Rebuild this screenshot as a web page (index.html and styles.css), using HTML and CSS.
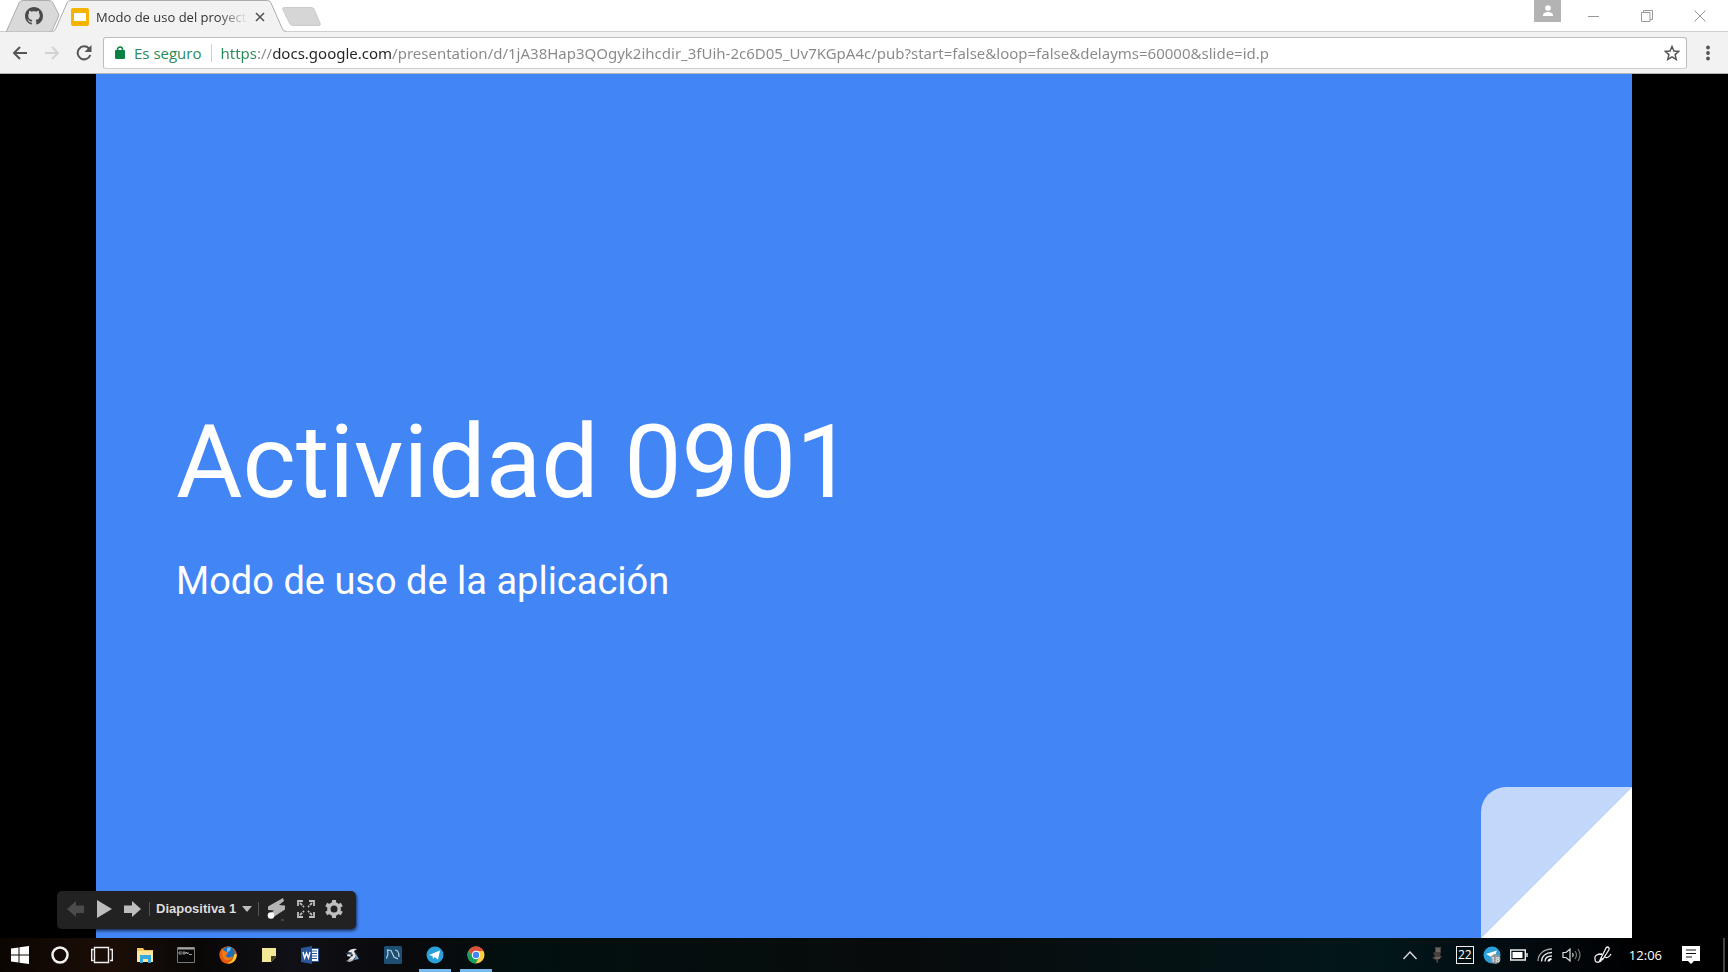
FILE: index.html
```html
<!DOCTYPE html>
<html lang="es">
<head>
<meta charset="utf-8">
<title>Modo de uso del proyecto</title>
<link rel="stylesheet" href="styles.css">
</head>
<body>
<header class="tabstrip">
  <button class="tab tab-pinned" aria-label="GitHub">
    <svg class="tab-shape" width="56" height="32" viewBox="0 0 56 32"><path d="M0 32L1 30 13 3Q14 .5 17 .5H43Q46 .5 47 3L53 15 47 29Q46 32 44 32Z" fill="#d9d9d9" stroke="#adadad"/></svg>
    <svg class="tab-icon" width="18" height="18" viewBox="0 0 16 16"><path fill="#4d4a4a" d="M8 0C3.58 0 0 3.58 0 8c0 3.54 2.29 6.53 5.47 7.59.4.07.55-.17.55-.38 0-.19-.01-.82-.01-1.49-2.01.37-2.53-.49-2.69-.94-.09-.23-.48-.94-.82-1.13-.28-.15-.68-.52-.01-.53.63-.01 1.08.58 1.23.82.72 1.21 1.87.87 2.33.66.07-.52.28-.87.51-1.07-1.78-.2-3.64-.89-3.64-3.95 0-.87.31-1.59.82-2.15-.08-.2-.36-1.02.08-2.12 0 0 .67-.21 2.2.82.64-.18 1.32-.27 2-.27s1.36.09 2 .27c1.53-1.04 2.2-.82 2.2-.82.44 1.1.16 1.92.08 2.12.51.56.82 1.27.82 2.15 0 3.07-1.87 3.75-3.65 3.95.29.25.54.73.54 1.48 0 1.07-.01 1.93-.01 2.2 0 .21.15.46.55.38A8.01 8.01 0 0 0 16 8c0-4.42-3.58-8-8-8z"/></svg>
  </button>
  <div class="tab tab-active">
    <svg class="tab-shape" width="234" height="33" viewBox="0 0 234 33"><path d="M0 33V31.500Q2 31 3 28L14 3Q15 .5 18 .5H214Q217 .5 218 3L229 28Q230 31.500 233 31.500V33Z" fill="#f2f2f2"/><path d="M0 31.500Q2 31 3 28L14 3Q15 .5 18 .5H214Q217 .5 218 3L229 28Q230 31.500 233 31.500" fill="none" stroke="#adadad"/></svg>
    <svg class="tab-icon" width="18" height="18" viewBox="0 0 18 18"><rect width="18" height="18" rx="2" fill="#f5b400"/><rect x="3" y="5" width="12" height="8" fill="#fff"/></svg>
    <span class="tab-title">Modo de uso del proyect</span>
    <button class="tab-close" aria-label="Cerrar"><svg width="10" height="10" viewBox="0 0 10 10"><path d="M1 1l8 8M9 1l-8 8" stroke="#555" stroke-width="1.600"/></svg></button>
  </div>
  <button class="new-tab" aria-label="Nueva pestaña"><svg width="40" height="20" viewBox="0 0 40 20"><path d="M2 .5H29Q31 .5 32 2L38 16Q39 18.500 37 18.500H11Q9 18.500 8 17L1 3Q0 .5 2 .5Z" fill="#d6d6d6" stroke="#cbcbcb"/></svg></button>
  <div class="window-buttons">
    <button class="profile" aria-label="Perfil"><svg width="12" height="12" viewBox="0 0 12 12" fill="#fff"><circle cx="6" cy="3" r="2.800"/><path d="M1 11V9.500Q2 7 6 7t5 2.500V11Z"/></svg></button>
    <button class="win" aria-label="Minimizar"><svg width="12" height="12" viewBox="0 0 12 12"><path d="M0 6.500H11" stroke="#999"/></svg></button>
    <button class="win" aria-label="Restaurar"><svg width="12" height="12" viewBox="0 0 12 12" fill="none" stroke="#999"><path d="M.5 2.500h8.500v9H.5zM2.500 2.500v-2h9v9H9"/></svg></button>
    <button class="win" aria-label="Cerrar ventana"><svg width="12" height="12" viewBox="0 0 12 12"><path d="M.5.5l11 11M11.500.5l-11 11" stroke="#999"/></svg></button>
  </div>
</header>

<nav class="toolbar">
  <button class="nav" aria-label="Atrás"><svg width="16" height="14" viewBox="0 0 16 14" fill="none" stroke="#555" stroke-width="2"><path d="M15 7H2M8 1L2 7l6 6"/></svg></button>
  <button class="nav" aria-label="Adelante"><svg width="16" height="14" viewBox="0 0 16 14" fill="none" stroke="#d2d2d2" stroke-width="2"><path d="M1 7H14M8 1l6 6-6 6"/></svg></button>
  <button class="nav" aria-label="Volver a cargar"><svg width="16" height="16" viewBox="0 0 16 16"><path d="M13 3.500A6.500 6.500 0 1 0 14.300 10" fill="none" stroke="#555" stroke-width="2"/><path d="M15.500 0v7h-7z" fill="#555"/></svg></button>
  <div class="omnibox">
    <svg width="10" height="13" viewBox="0 0 10 13"><rect y="4" width="10" height="9" rx="1" fill="#0b8043"/><path d="M2.500 5V3.500a2.500 2.500 0 0 1 5 0V5" fill="none" stroke="#0b8043" stroke-width="1.500"/></svg>
    <label class="secure" for="url">Es seguro</label>
    <input class="url" id="url" type="text" spellcheck="false" value="https://docs.google.com/presentation/d/1jA38Hap3QOgyk2ihcdir_3fUih-2c6D05_Uv7KGpA4c/pub?start=false&amp;loop=false&amp;delayms=60000&amp;slide=id.p">
    <button class="star" aria-label="Añadir a marcadores"><svg width="16" height="16" viewBox="0 0 16 16"><path d="M8 1.500l1.900 4.500 4.900.4-3.700 3.200 1.100 4.800L8 11.900l-4.200 2.500 1.100-4.800L1.200 6.400 6.100 6z" fill="none" stroke="#555" stroke-width="1.500"/></svg></button>
  </div>
  <button class="menu" aria-label="Menú"><svg width="4" height="16" viewBox="0 0 4 16" fill="#555"><circle cx="2" cy="2.500" r="1.900"/><circle cx="2" cy="8" r="1.900"/><circle cx="2" cy="13.500" r="1.900"/></svg></button>
</nav>

<main class="stage">
  <section class="slide">
    <h1 class="slide-title">Actividad 0901</h1>
    <p class="slide-subtitle">Modo de uso de la aplicación</p>
    <svg class="fold" viewBox="0 0 151 151"><path d="M0 151V25A25 25 0 0 1 25 0H151Z" fill="#c2d7fa"/><path d="M0 151L151 0V151Z" fill="#fff"/></svg>
  </section>
  <div class="player">
    <button aria-label="Anterior"><svg width="18" height="18" viewBox="0 0 18 18"><path d="M0 9L9 1V5.500H17V13H9V17Z" fill="#4b4b4b"/></svg></button>
    <button aria-label="Reproducir"><svg width="18" height="18" viewBox="0 0 18 18"><path d="M2 0L17 9 2 18Z" fill="#bdbdbd"/></svg></button>
    <button aria-label="Siguiente"><svg width="18" height="18" viewBox="0 0 18 18"><path d="M18 9L9 1V5.500H1V13H9V17Z" fill="#bdbdbd"/></svg></button>
    <span class="slide-picker">
      <select aria-label="Diapositiva"><option>Diapositiva 1</option></select>
      <svg width="10" height="6" viewBox="0 0 10 6"><path d="M0 0H10L5 6Z" fill="#bdbdbd"/></svg>
    </span>
    <button aria-label="Puntero"><svg width="20" height="24" viewBox="0 0 20 24"><path d="M16 1L1 9.500V13L7 13.500 2 18 5 21 18 12.500V8.500L12 8 17 4Z" fill="#b4b4b4"/><circle cx="4" cy="18.500" r="3.300" fill="#fff"/><path d="M14 23h3" stroke="#666"/></svg></button>
    <button aria-label="Pantalla completa"><svg width="18" height="18" viewBox="0 0 18 18" fill="none" stroke="#bdbdbd" stroke-width="1.800"><path d="M1 6V1H6M12 1h5V6M17 12v5H12M6 17H1V12"/><path d="M3 3l4 4M15 3l-4 4M3 15l4-4M15 15l-4-4" stroke-dasharray="3 1"/></svg></button>
    <button aria-label="Opciones"><svg width="18" height="18" viewBox="0 0 18 18"><circle cx="9" cy="9" r="5.200" fill="none" stroke="#bdbdbd" stroke-width="3.400"/><path d="M9 0V3M9 15v3M1.200 4.500L4 6M14 12l2.800 1.500M1.200 13.500L4 12M14 6l2.800-1.500" stroke="#bdbdbd" stroke-width="4"/></svg></button>
  </div>
</main>

<footer class="taskbar">
  <nav class="apps">
    <button aria-label="Inicio"><svg width="18" height="18" viewBox="0 0 18 18" fill="#fff"><path d="M0 2.500L7.500 1.400V8.500H0zM8.500 1.200L18 0V8.500H8.500zM0 9.500H7.500V16.600L0 15.500zM8.500 9.500H18V18L8.500 16.800z"/></svg></button>
    <button aria-label="Cortana"><svg width="18" height="18" viewBox="0 0 18 18"><circle cx="9" cy="9" r="7.500" fill="none" stroke="#f2f2f2" stroke-width="2.500"/></svg></button>
    <button aria-label="Vista de tareas"><svg width="22" height="18" viewBox="0 0 22 18" fill="none" stroke="#eee" stroke-width="1.400"><path d="M3.500 1.500h14v15h-14zM2.500 3.500H.7v11h1.800M19 3.500h2.300v11H19"/></svg></button>
    <button aria-label="Explorador"><svg width="18" height="18" viewBox="0 0 18 18"><path d="M1 2h6l1.500 2H17v12H1z" fill="#f2c75c"/><path d="M1 5h16v11H1z" fill="#fee69c"/><path d="M4 9h11v8h-3v-4H7v4H4z" fill="#36a9df"/></svg></button>
    <button aria-label="Símbolo del sistema"><svg width="18" height="16" viewBox="0 0 18 16"><path d="M.5.5h17v15H.5z" fill="#080808" stroke="#777"/><path d="M1 1.500h16" stroke="#a5a5a5" stroke-width="2"/><path d="M2 5h3M2 7h3M2 5v2M6 5v2h2V5H6M9 7V5l2 2V5M12 7.500h3" fill="none" stroke="#bbb" stroke-width=".8"/></svg></button>
    <button aria-label="Firefox"><svg width="18" height="18" viewBox="0 0 18 18"><circle cx="9" cy="9" r="8.700" fill="#e8590c"/><path d="M17.700 8c.5 6-4 10-10 9.500C13 16 14.500 13 15 8z" fill="#ffcb2e"/><circle cx="9.500" cy="6.800" r="6.200" fill="#1f6fb5"/><path d="M8 2l4-1-1 4-3 1z" fill="#69bfe8"/><path d="M2.500 2.500L5.500 5 9 6.500C9 8 7 8.500 7 10c2 2.500 5 1.500 7 0-1 4-6 5.500-9 3C3 11 3 8 2.500 2.500Z" fill="#f0781a"/></svg></button>
    <button aria-label="Notas"><svg width="16" height="16" viewBox="0 0 16 16"><path d="M1 1h14v9l-5 5H1z" fill="#f4e795"/><path d="M15 9v1l-5 5V9z" fill="#403b20"/></svg></button>
    <button aria-label="Word"><svg width="18" height="18" viewBox="0 0 18 18"><path d="M9 2.500h8.500v13H9z" fill="#fff" stroke="#2b579a"/><path d="M11 5h5M11 7.500h5M11 10h5M11 12.500h5" stroke="#2b579a"/><path d="M0 2L11 0V18L0 16z" fill="#2b579a"/><path d="M2 6l1.600 6L5.500 7l2 5L9 6" fill="none" stroke="#fff" stroke-width="1.400"/></svg></button>
    <button aria-label="BlueJ"><svg width="16" height="16" viewBox="0 0 16 16"><path d="M4 5Q7 1 13 2L10 4 12 9 9 13H4L7 10 3 9Z" fill="#e6e9ec"/><path d="M11 5l4 7-5 1 2-4z" fill="#6d9cc5"/><path d="M1 7l3-2 4 .5-1 2z" fill="#2a3a48"/><path d="M8 6l1 3-3 1z" fill="#182430"/><path d="M2 14l5-2 3 1-4 2z" fill="#aeb9c2"/></svg></button>
    <button aria-label="MySQL Workbench"><svg width="18" height="18" viewBox="0 0 18 18"><rect width="18" height="18" rx="1.500" fill="#1d4e73"/><path d="M2.500 12.500L4 8 3.500 4l3.500.5L10 11l4 2M11 4c3 0 4 3 4 7" fill="none" stroke="#b9d0de" stroke-width="1.200"/></svg></button>
    <button class="running" aria-label="Telegram"><svg width="18" height="18" viewBox="0 0 18 18"><circle cx="9" cy="9" r="8.500" fill="#2aa1da"/><path d="M3 9L14 4.500 12 13.500 8.500 11 7 13 6.500 10z" fill="#fff"/></svg></button>
    <button class="running" aria-label="Chrome"><svg width="18" height="18" viewBox="0 0 18 18"><circle cx="9" cy="9" r="8.500" fill="#ffcd40"/><path d="M1.500 4.800A8.500 8.500 0 0 1 16.500 5H9L5.500 11z" fill="#dd4f3f"/><path d="M1.500 4.800A8.500 8.500 0 0 0 8.500 17.500L12.500 11 9 13 5.500 11z" fill="#13a15f"/><circle cx="9" cy="9" r="4.200" fill="#fff"/><circle cx="9" cy="9" r="3.200" fill="#4285f4"/></svg></button>
  </nav>
  <div class="tray">
    <button class="more" aria-label="Mostrar iconos ocultos"><svg width="16" height="16" viewBox="0 0 16 16"><path d="M1.500 12L8 5l6.500 7" fill="none" stroke="#ddd" stroke-width="1.400"/></svg></button>
    <button class="mic" aria-label="Micrófono"><svg width="12" height="18" viewBox="0 0 12 18"><path d="M4 1h6v5l-1 3 2 2-4 3v3H6l-1-3-4-2 3-2-2-3 2-1z" fill="#4a4240"/><path d="M5 3h4M5 5h4M4 12h5" stroke="#8e8582"/></svg></button>
    <button class="temp" aria-label="Temperatura 22">22</button>
    <button class="tray-telegram" aria-label="Telegram, mensajes sin leer"><svg width="18" height="18" viewBox="0 0 18 18"><circle cx="9" cy="9" r="8.500" fill="#2aa1da"/><path d="M3 8L14 4.500 11 12 6.500 10z" fill="#fff"/><circle cx="12.500" cy="13" r="5" fill="#91959b"/></svg><span class="unread">18</span></button>
    <button aria-label="Batería"><svg width="18" height="12" viewBox="0 0 18 12"><path d="M.7 1h14.600v10H.7zM17 4v4" fill="none" stroke="#eee" stroke-width="1.400"/><path d="M2.500 3h10v6h-10z" fill="#fff"/></svg></button>
    <button aria-label="Wi-Fi"><svg width="16" height="16" viewBox="0 0 16 16" fill="none" stroke-width="1.300"><path d="M1 14C1 7 7 2 15 2" stroke="#aaa"/><path d="M4.500 14.500C4.500 9 9 5.500 15 5.500M8 14.500C8 11 11 9 15 9" stroke="#e5e5e5"/><path d="M11.500 14.500q0-2 3-2.500" stroke="#fff" stroke-width="2"/></svg></button>
    <button class="volume" aria-label="Volumen"><svg width="20" height="16" viewBox="0 0 20 16" fill="none" stroke="#ddd" stroke-width="1.200"><path d="M1 5.500h3L8 2v12L4 10.500H1z"/><path d="M10.500 6q1.500 2 0 4"/><path d="M13 4q3 4 0 8M16 2q4 6 0 12" stroke="#777"/></svg></button>
    <button aria-label="Lápiz"><svg width="18" height="18" viewBox="0 0 18 18" fill="none" stroke="#eee" stroke-width="1.300"><path d="M6 14L12 2q1.500-2 3 0 .5 1-.5 2.500L9 13l-3.500 2.500zM8 8Q0 8 1 13q0 4 4 3 3-1 3-4M11 11q3 2 6-3"/></svg></button>
    <time class="clock">12:06</time>
    <button aria-label="Notificaciones"><svg width="18" height="18" viewBox="0 0 18 18"><path d="M0 0h18v15h-6l-3 3-3-3H0z" fill="#fff"/><path d="M4 4h10M4 7.500h10M4 11h6" stroke="#111" stroke-width="1.200"/></svg></button>
    <button class="show-desktop" aria-label="Mostrar escritorio"></button>
  </div>
</footer>
</body>
</html>
```

FILE: styles.css
```css
* { box-sizing: border-box; }

body {
  margin: 0;
  min-height: 100vh;
  display: flex;
  flex-direction: column;
  background: #000;
  font-family: "Open Sans", "Noto Sans", sans-serif;
}

button {
  display: flex;
  align-items: center;
  justify-content: center;
  padding: 0;
  border: 0;
  background: none;
  font: inherit;
  color: inherit;
}

svg { display: block; flex: none; }

/* Tab strip */
.tabstrip {
  display: flex;
  height: 32px;
  padding-left: 6px;
  background: #fff;
  border-bottom: 1px solid #cfcfcf;
}

.tab { position: relative; display: flex; align-items: center; height: 33px; }
.tab-shape { position: absolute; left: 0; top: 0; }
.tab-icon { position: relative; }
.tab-pinned { width: 56px; height: 32px; }

.tab-active {
  z-index: 1;
  width: 234px;
  margin-left: -9px;
  padding: 0 18px;
}

.tab-title {
  position: relative;
  flex: 1;
  margin-left: 7px;
  white-space: nowrap;
  font-size: 13px;
  line-height: 20px;
  color: #333;
  -webkit-mask-image: linear-gradient(to right, #000 122px, transparent 152px);
  mask-image: linear-gradient(to right, #000 122px, transparent 152px);
}

.tab-close { position: relative; width: 16px; height: 16px; margin: 0 1px 0 6px; }
.new-tab { width: 40px; height: 34px; margin-left: -5px; }

.window-buttons { display: flex; align-items: center; margin: 0 2px 0 auto; }
.profile { width: 27px; height: 22px; margin-right: 6px; align-self: flex-start; background: #b3b3b3; }
.win { width: 53px; height: 31px; }

/* Toolbar */
.toolbar {
  display: flex;
  align-items: center;
  height: 42px;
  padding-left: 4px;
  background: #f2f2f2;
  border-bottom: 1px solid #b5b5b5;
}

.nav { width: 32px; height: 32px; }

.omnibox {
  flex: 1;
  display: flex;
  align-items: center;
  height: 32px;
  margin-left: 3px;
  padding: 0 6px 0 11px;
  background: #fff;
  border: 1px solid #bdbdbd;
  border-bottom-color: #cfcfcf;
  border-radius: 3px;
}

.secure {
  margin-left: 9px;
  padding-right: 10px;
  border-right: 1px solid #d0d0d0;
  font-size: 15px;
  line-height: 18px;
  color: #2b8a5b;
}

.url {
  flex: 1;
  min-width: 0;
  height: 28px;
  margin-left: 8px;
  padding: 0;
  border: 0;
  outline: 0;
  font: 15px "Noto Sans", "Open Sans", sans-serif;
  color: #888;
  background: linear-gradient(to right, #2b8a5b 38px, #888 38px 52px, #222 52px 171px, #888 171px);
  -webkit-background-clip: text;
  background-clip: text;
  -webkit-text-fill-color: transparent;
}

.star { width: 16px; height: 24px; }
.menu { width: 41px; height: 32px; }

/* Presentation */
.stage {
  position: relative;
  flex: 1;
  display: flex;
  justify-content: center;
}

.slide {
  position: relative;
  flex: none;
  height: calc(100vh - 108px);
  aspect-ratio: 16 / 9;
  padding: 328px 80px 0;
  background: #4285f4;
  color: #fff;
  font-family: Roboto, sans-serif;
}

.slide-title { margin: 0; font-size: 102px; line-height: 120px; font-weight: 400; }
.slide-subtitle { margin: 35px 0 0; font-size: 38px; line-height: 48px; }
.fold { position: absolute; right: 0; bottom: 0; width: 151px; height: 151px; }

.player {
  position: absolute;
  left: 57px;
  bottom: 9px;
  display: flex;
  align-items: center;
  gap: 10px;
  height: 38px;
  padding: 0 13px 3px 10px;
  background: #222;
  border-radius: 5px;
  box-shadow: 1px 2px 3px rgba(0, 0, 0, .6);
}

.slide-picker {
  display: flex;
  align-items: center;
  gap: 5px;
  height: 14px;
  margin: 0 -2px;
  padding: 0 6px;
  border: solid #555;
  border-width: 0 1px;
}

.slide-picker select {
  appearance: none;
  padding: 0;
  border: 0;
  background: none;
  color: #ddd;
  font: bold 13px "Liberation Sans", Arial, sans-serif;
}

.slide-picker option { color: #000; }

/* Taskbar */
.taskbar {
  display: flex;
  justify-content: space-between;
  height: 34px;
  color: #fff;
  background: linear-gradient(to right, #0b0502, #1c0e07 110px, #090706 200px, #101016 290px, #0a090c 400px, #02100f 520px, #080b0c 900px, #02171a 1380px, #020b10 1520px, #000 1640px);
}

.apps { display: grid; grid-template-columns: 40px 40px 44px repeat(9, 1fr); width: 497px; }
.apps button { height: 34px; }
.running { background: linear-gradient(#76b9ed, #76b9ed) center bottom / 32px 3px no-repeat; }

.tray { display: flex; align-items: center; gap: 9px; }
.tray button { height: 34px; }
.more, .mic { margin-right: 4px; }
.volume { margin-right: 3px; }
.tray .temp { width: 18px; height: 18px; border: 1px solid #eee; font-size: 12px; line-height: 16px; }
.tray-telegram { position: relative; }
.unread { position: absolute; right: 1px; bottom: 8px; font-size: 8px; line-height: 10px; }
.clock { margin: 0 11px 0 8px; font-size: 13px; line-height: 18px; }
.tray .show-desktop { width: 5px; margin-left: 14px; border-left: 2px solid #444; }
```
